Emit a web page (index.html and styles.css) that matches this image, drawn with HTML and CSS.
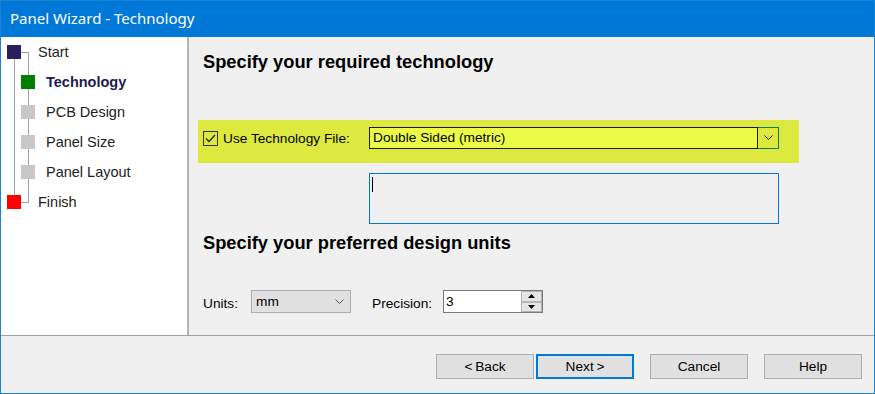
FILE: index.html
```html
<!DOCTYPE html>
<html lang="en">
<head>
    <meta charset="UTF-8">
    <title>Panel Wizard - Technology</title>
    <link rel="stylesheet" href="styles.css">
</head>
<body>
<div class="window">
    <div class="titlebar">Panel Wizard - Technology</div>

    <div class="content">
        <div class="sidebar">
            <svg class="tree-lines" width="40" height="190" viewBox="0 0 40 190">
                <line x1="13.5" y1="22" x2="13.5" y2="158" stroke="#a0a0a0" stroke-width="1"/>
                <line x1="20" y1="15.5" x2="28" y2="15.5" stroke="#a0a0a0" stroke-width="1"/>
                <line x1="27.5" y1="15" x2="27.5" y2="166" stroke="#a0a0a0" stroke-width="1"/>
                <line x1="20" y1="165.5" x2="28" y2="165.5" stroke="#a0a0a0" stroke-width="1"/>
            </svg>
            <ul class="steps">
                <li class="step top"><span class="box start"></span>Start</li>
                <li class="step sub current"><span class="box done"></span>Technology</li>
                <li class="step sub"><span class="box"></span>PCB Design</li>
                <li class="step sub"><span class="box"></span>Panel Size</li>
                <li class="step sub"><span class="box"></span>Panel Layout</li>
                <li class="step top"><span class="box finish"></span>Finish</li>
            </ul>
        </div>

        <div class="main">
            <h2>Specify your required technology</h2>

            <div class="tech-row">
                <label class="check-label">
                    <span class="checkbox">
                        <svg width="13" height="13" viewBox="0 0 13 13">
                            <path d="M2 6.5 L5 9.5 L11 3" fill="none" stroke="#222" stroke-width="1.3"/>
                        </svg>
                    </span>
                    Use Technology File:
                </label>
                <div class="combo tech-combo">
                    <span class="combo-text">Double Sided (metric)</span>
                    <span class="drop">
                        <svg width="9" height="6" viewBox="0 0 9 6">
                            <path d="M0.5 0.5 L4.5 4.5 L8.5 0.5" fill="none" stroke="#222" stroke-width="1"/>
                        </svg>
                    </span>
                </div>
            </div>

            <div class="memo"><span class="caret"></span></div>

            <h2 class="second">Specify your preferred design units</h2>

            <div class="units-row">
                <span class="field-label units-label">Units:</span>
                <div class="select">
                    <span>mm</span>
                    <svg width="9" height="6" viewBox="0 0 9 6">
                        <path d="M0.5 0.5 L4.5 4.5 L8.5 0.5" fill="none" stroke="#555" stroke-width="1"/>
                    </svg>
                </div>
                <span class="field-label precision-label">Precision:</span>
                <div class="spin">
                    <span class="spin-value">3</span>
                    <div class="spin-buttons">
                        <span class="spin-btn">
                            <svg width="7" height="4" viewBox="0 0 7 4"><path d="M0 4 L3.5 0 L7 4 Z" fill="#000"/></svg>
                        </span>
                        <span class="spin-btn">
                            <svg width="7" height="4" viewBox="0 0 7 4"><path d="M0 0 L3.5 4 L7 0 Z" fill="#000"/></svg>
                        </span>
                    </div>
                </div>
            </div>
        </div>
    </div>

    <div class="footer">
        <button class="btn back">&lt;&thinsp;Back</button>
        <button class="btn next">Next&thinsp;&gt;</button>
        <button class="btn cancel">Cancel</button>
        <button class="btn help">Help</button>
    </div>
</div>
</body>
</html>
```

FILE: styles.css
```css
* {
    box-sizing: border-box;
}

body {
    margin: 0;
    font-family: "Liberation Sans", Arial, sans-serif;
    color: #000;
    background-color: #f0f0f0;
}

.window {
    width: 875px;
    height: 394px;
    display: flex;
    flex-direction: column;
    border-left: 1px solid #1883d7;
    border-right: 1px solid #1883d7;
    border-bottom: 1px solid #1883d7;
    background-color: #f0f0f0;
}

.titlebar {
    height: 37px;
    flex-shrink: 0;
    background-color: #0078d7;
    border-top: 1px solid #1a80d2;
    color: #fff;
    font-family: "Noto Sans", "Open Sans", sans-serif;
    font-size: 15px;
    line-height: 35px;
    padding-left: 9px;
}

.content {
    height: 298px;
    display: flex;
    flex-shrink: 0;
}

/* step tree on the left */
.sidebar {
    width: 188px;
    background-color: #fff;
    border-right: 2px solid #b4b4b4;
    position: relative;
}

.tree-lines {
    position: absolute;
    top: 0;
    left: 0;
}

.steps {
    list-style: none;
    margin: 0;
    padding: 0;
    position: relative;
}

.step {
    height: 30px;
    display: flex;
    align-items: center;
    font-size: 14.5px;
    color: #222;
}

.step.top {
    padding-left: 6px;
}

.step.top .box {
    margin-right: 17px;
}

.step.sub {
    padding-left: 20px;
}

.step.sub .box {
    margin-right: 11px;
}

.step.current {
    font-weight: bold;
    color: #1f1a4f;
}

.box {
    width: 14px;
    height: 14px;
    background-color: #c8c8c8;
}

.box.start {
    background-color: #2a1e5c;
}

.box.done {
    background-color: #008000;
}

.box.finish {
    background-color: #ff0000;
}

/* main page */
.main {
    flex: 1;
    padding: 14px 0 0 14px;
    font-size: 13.7px;
}

h2 {
    margin: 0;
    font-size: 18.3px;
    line-height: 22px;
    font-weight: bold;
    color: #000;
}

h2.second {
    margin-top: 8px;
}

.tech-row {
    margin-top: 47px;
    margin-left: -5px;
    width: 601px;
    height: 43px;
    padding: 7px 0 0 5px;
    background-color: #dde93e;
    display: flex;
    align-items: flex-start;
}

.check-label {
    width: 166px;
    height: 22px;
    display: flex;
    align-items: center;
}

.checkbox {
    width: 15px;
    height: 15px;
    border: 1px solid #333;
    margin-right: 5px;
    display: flex;
    align-items: center;
    justify-content: center;
}

.combo {
    display: flex;
    height: 22px;
}

.tech-combo {
    width: 410px;
}

.combo-text {
    flex: 1;
    border: 1px solid #1a1a1a;
    background-color: #ebfb47;
    padding-left: 3px;
    line-height: 20px;
}

.drop {
    width: 21px;
    border: 1px solid #0a8050;
    border-left: none;
    background-color: #dde93e;
    display: flex;
    align-items: center;
    justify-content: center;
}

.memo {
    margin-top: 10px;
    margin-left: 166px;
    width: 410px;
    height: 51px;
    border: 1px solid #0078d7;
    padding: 3px 0 0 2px;
}

.caret {
    display: block;
    width: 1px;
    height: 15px;
    background-color: #000;
}

.units-row {
    margin-top: 36px;
    display: flex;
    align-items: center;
    height: 23px;
}

.field-label {
    padding-top: 3px;
}

.units-label {
    width: 48px;
}

.precision-label {
    width: 71px;
    margin-left: 21px;
}

.select {
    width: 100px;
    height: 23px;
    background-color: #e1e1e1;
    border: 1px solid #adadad;
    display: flex;
    align-items: center;
    justify-content: space-between;
    padding: 0 6px 0 4px;
}

.spin {
    width: 100px;
    height: 23px;
    background-color: #fff;
    border: 1px solid #7a7a7a;
    display: flex;
}

.spin-value {
    flex: 1;
    padding-left: 2px;
    line-height: 21px;
}

.spin-buttons {
    width: 21px;
    display: flex;
    flex-direction: column;
}

.spin-btn {
    flex: 1;
    background-color: #e6e6e6;
    border: 1px solid #b4b4b4;
    display: flex;
    align-items: center;
    justify-content: center;
}

/* bottom button bar */
.footer {
    flex: 1;
    border-top: 1px solid #a0a0a0;
    display: flex;
    justify-content: flex-end;
    align-items: flex-start;
    padding: 18px 12px 0 0;
}

.btn {
    width: 98px;
    height: 25px;
    background-color: #e1e1e1;
    border: 1px solid #adadad;
    font-family: "Liberation Sans", Arial, sans-serif;
    font-size: 13.7px;
    color: #000;
    padding: 0;
    margin-left: 16px;
}

.btn.next {
    margin-left: 2px;
    border: 2px solid #0078d7;
}
```
